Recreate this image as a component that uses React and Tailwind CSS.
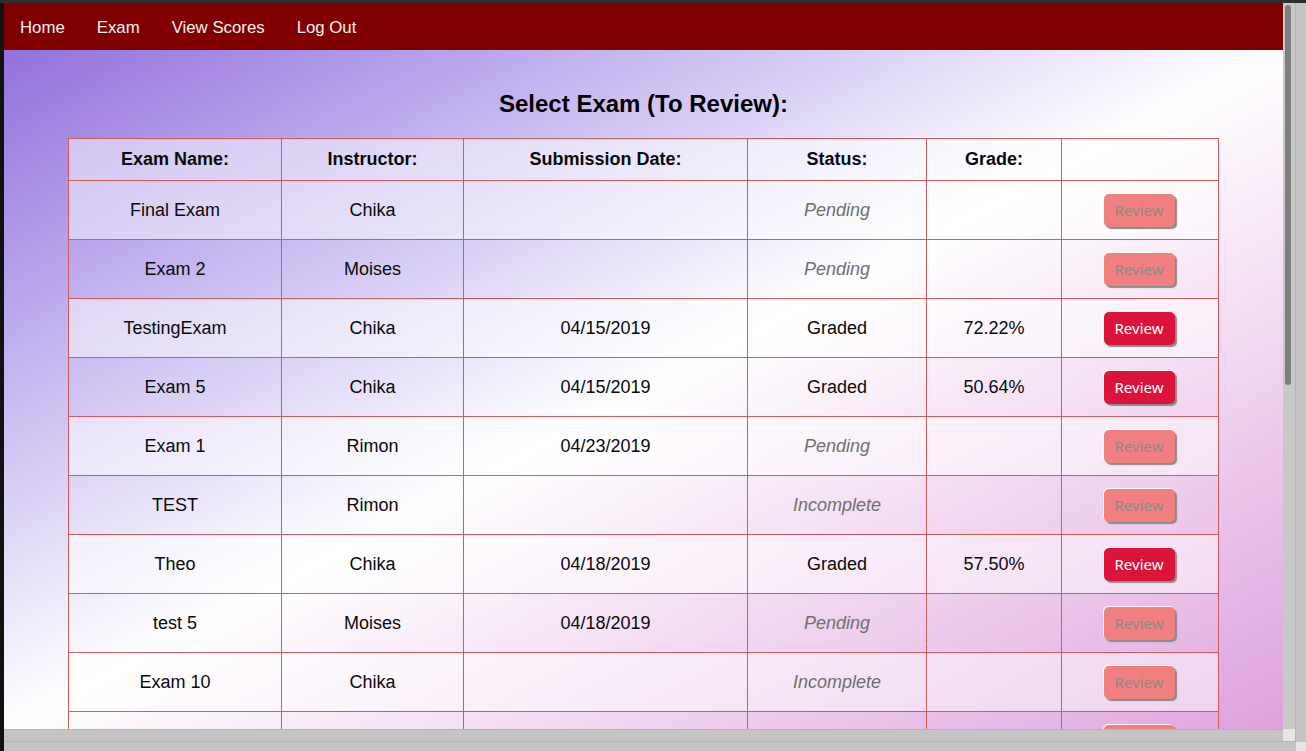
import React from 'react'

const exams = [
  { name: 'Final Exam', instructor: 'Chika', date: '', status: 'Pending', grade: '' },
  { name: 'Exam 2', instructor: 'Moises', date: '', status: 'Pending', grade: '' },
  { name: 'TestingExam', instructor: 'Chika', date: '04/15/2019', status: 'Graded', grade: '72.22%' },
  { name: 'Exam 5', instructor: 'Chika', date: '04/15/2019', status: 'Graded', grade: '50.64%' },
  { name: 'Exam 1', instructor: 'Rimon', date: '04/23/2019', status: 'Pending', grade: '' },
  { name: 'TEST', instructor: 'Rimon', date: '', status: 'Incomplete', grade: '' },
  { name: 'Theo', instructor: 'Chika', date: '04/18/2019', status: 'Graded', grade: '57.50%' },
  { name: 'test 5', instructor: 'Moises', date: '04/18/2019', status: 'Pending', grade: '' },
  { name: 'Exam 10', instructor: 'Chika', date: '', status: 'Incomplete', grade: '' },
  // next row is scrolled below the fold, only its button shows
  { name: '', instructor: '', date: '', status: '', grade: '' },
]

const navLinks = ['Home', 'Exam', 'View Scores', 'Log Out']

const ReviewButton = ({ enabled }) => (
  <button
    disabled={!enabled}
    className={
      enabled
        ? 'w-[71px] bg-[#dc143c] text-white rounded-[5px] py-[6px] text-[15px] leading-[21px] font-["Noto_Sans",sans-serif] shadow-[2px_2px_1px_#8a8a8a,-1px_-1px_0_rgba(255,255,255,0.85)]'
        : 'w-[71px] bg-[#f08080] text-[#8a8a8a] rounded-[5px] py-[6px] text-[15px] leading-[21px] font-["Noto_Sans",sans-serif] shadow-[2px_2px_1px_#8a8a8a,-1px_-1px_0_rgba(255,255,255,0.85)]'
    }
  >
    Review
  </button>
)

export default function App() {
  return (
    <div className="w-[1306px] h-[751px] flex flex-col bg-[#c4c4c4] overflow-hidden font-['Liberation_Sans',Arial,sans-serif]">
      {/* window top edge */}
      <div className="h-[3px] bg-[#2d2d2d]" />
      <div className="flex-1 flex min-h-0">
        <div className="w-[4px] bg-[#111]" />
        <div className="flex-1 flex flex-col min-w-0">
          <div className="flex-1 flex min-h-0">
            {/* inner frame */}
            <div className="flex-1 flex flex-col border-r border-b border-[#b4b4b4] min-w-0">
              <div className="flex-1 flex min-h-0">
                {/* page */}
                <div className="flex-1 flex flex-col overflow-hidden min-w-0">
                  <nav className="h-[47px] bg-[#800000] flex shrink-0">
                    {navLinks.map((link) => (
                      <a key={link} href="#" className="px-[16px] pt-[15px] pb-[13px] text-[16.8px] leading-[19px] text-[#f2f2f2]">
                        {link}
                      </a>
                    ))}
                  </nav>
                  <div className="flex-1 overflow-hidden bg-linear-to-br from-[#9370db] via-white to-[#dda0dd] pt-[40px]">
                    <h2 className="text-[24px] leading-[28px] font-bold text-center text-black mb-[20px]">
                      Select Exam (To Review):
                    </h2>
                    <table className="mx-auto w-[1151px] table-fixed border-collapse text-[18px] text-[#0a0a0a]">
                      <thead>
                        <tr className="h-[42px] bg-white/50">
                          <th className="w-[213px] border border-[#d45b57] font-bold">Exam Name:</th>
                          <th className="w-[182px] border border-[#d45b57] font-bold">Instructor:</th>
                          <th className="w-[284px] border border-[#d45b57] font-bold">Submission Date:</th>
                          <th className="w-[179px] border border-[#d45b57] font-bold">Status:</th>
                          <th className="w-[135px] border border-[#d45b57] font-bold">Grade:</th>
                          <th className="w-[157px] border border-[#d45b57]"></th>
                        </tr>
                      </thead>
                      <tbody>
                        {exams.map((exam, i) => (
                          <tr key={i} className={i % 2 === 0 ? 'h-[59px] bg-white/50' : 'h-[59px] bg-white/5'}>
                            <td className="border border-[#d45b57] text-center">{exam.name}</td>
                            <td className="border border-[#d45b57] text-center">{exam.instructor}</td>
                            <td className="border border-[#d45b57] text-center">{exam.date}</td>
                            <td
                              className={
                                exam.status === 'Graded'
                                  ? 'border border-[#d45b57] text-center'
                                  : 'border border-[#d45b57] text-center italic text-[#6f6f6f]'
                              }
                            >
                              {exam.status}
                            </td>
                            <td className="border border-[#d45b57] text-center">{exam.grade}</td>
                            <td className="border border-[#d45b57] text-center pr-[2px]">
                              <ReviewButton enabled={exam.status === 'Graded'} />
                            </td>
                          </tr>
                        ))}
                      </tbody>
                    </table>
                  </div>
                </div>
                {/* vertical scrollbar */}
                <div className="w-[12px] bg-[#c8c8c8] pt-[2px] pl-[2px]">
                  <div className="w-[6px] h-[380px] rounded-full bg-[#7e7e7e]" />
                </div>
              </div>
              {/* horizontal scrollbar */}
              <div className="h-[12px] flex">
                <div className="flex-1 bg-[#c4c4c4] border-t border-[#b4b4b4]" />
                <div className="w-[12px] bg-[#e6e6e6]" />
              </div>
            </div>
            <div className="w-[10px] bg-[#c4c4c4]" />
          </div>
          <div className="h-[9px] flex">
            <div className="flex-1 bg-[#c4c4c4]" />
            <div className="w-[10px] bg-[#e6e6e6]" />
          </div>
        </div>
      </div>
    </div>
  )
}
